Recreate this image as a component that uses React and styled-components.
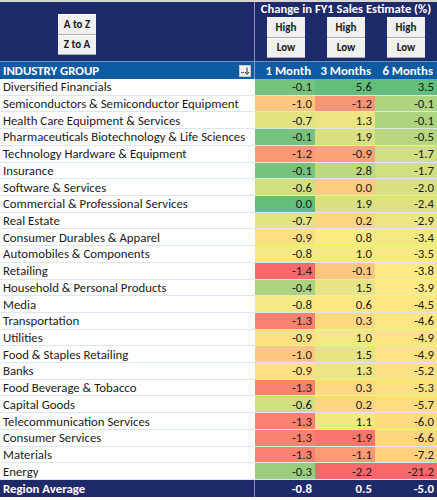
import styled, {createGlobalStyle} from 'styled-components';

const GlobalStyle = createGlobalStyle`
  body {
    margin: 0;
    background: #ffffff;
    font-family: Carlito, Lato, "Liberation Sans", sans-serif;
  }
`;

const rows = [
  ['Diversified Financials', -0.1, 5.6, 3.5],
  ['Semiconductors & Semiconductor Equipment', -1.0, -1.2, -0.1],
  ['Health Care Equipment & Services', -0.7, 1.3, -0.1],
  ['Pharmaceuticals Biotechnology & Life Sciences', -0.1, 1.9, -0.5],
  ['Technology Hardware & Equipment', -1.2, -0.9, -1.7],
  ['Insurance', -0.1, 2.8, -1.7],
  ['Software & Services', -0.6, 0.0, -2.0],
  ['Commercial & Professional Services', 0.0, 1.9, -2.4],
  ['Real Estate', -0.7, 0.2, -2.9],
  ['Consumer Durables & Apparel', -0.9, 0.8, -3.4],
  ['Automobiles & Components', -0.8, 1.0, -3.5],
  ['Retailing', -1.4, -0.1, -3.8],
  ['Household & Personal Products', -0.4, 1.5, -3.9],
  ['Media', -0.8, 0.6, -4.5],
  ['Transportation', -1.3, 0.3, -4.6],
  ['Utilities', -0.9, 1.0, -4.9],
  ['Food & Staples Retailing', -1.0, 1.5, -4.9],
  ['Banks', -0.9, 1.3, -5.2],
  ['Food Beverage & Tobacco', -1.3, 0.3, -5.3],
  ['Capital Goods', -0.6, 0.2, -5.7],
  ['Telecommunication Services', -1.3, 1.1, -6.0],
  ['Consumer Services', -1.3, -1.9, -6.6],
  ['Materials', -1.3, -1.1, -7.2],
  ['Energy', -0.3, -2.2, -21.2],
];

const average = [-0.8, 0.5, -5.0];
const periods = ['1 Month', '3 Months', '6 Months'];

const RED = [248, 105, 107];
const YELLOW = [255, 235, 132];
const GREEN = [99, 190, 123];

// excel style 3-colour scale: min / median / max per column
function columnScale(col) {
  const sorted = rows.map(r => r[col + 1]).sort((a, b) => a - b);
  const half = sorted.length / 2;
  const mid = (sorted[half - 1] + sorted[half]) / 2;
  return {min: sorted[0], mid, max: sorted[sorted.length - 1]};
}

const scales = [0, 1, 2].map(columnScale);

function mix(a, b, t) {
  return `rgb(${a.map((c, i) => Math.round(c + (b[i] - c) * t)).join(',')})`;
}

function heatColor(value, {min, mid, max}) {
  if (value <= mid) return mix(RED, YELLOW, (value - min) / (mid - min));
  return mix(YELLOW, GREEN, (value - mid) / (max - mid));
}

export default function App() {
  return (
    <>
      <GlobalStyle />
      <Sheet>
        <TopBand>
          <SortPanel>
            <ButtonStack>
              <SheetButton>A to Z</SheetButton>
              <SheetButton>Z to A</SheetButton>
            </ButtonStack>
          </SortPanel>
          <EstimatePanel>
            <Title>Change in FY1 Sales Estimate (%)</Title>
            <ButtonRow>
              {periods.map(p => (
                <ButtonStack key={p}>
                  <SheetButton>High</SheetButton>
                  <SheetButton>Low</SheetButton>
                </ButtonStack>
              ))}
            </ButtonRow>
          </EstimatePanel>
        </TopBand>

        <HeaderRow>
          <HeaderLabel>
            INDUSTRY GROUP
            <FilterButton>
              <svg width="10" height="10" viewBox="0 0 10 10">
                <path d="M1 6.5h3" stroke="#666" strokeWidth="1" />
                <path d="M7 1.5v6" stroke="#333" strokeWidth="1" />
                <path d="M5 6l2 2.5 2-2.5" fill="none" stroke="#333" strokeWidth="1" />
              </svg>
            </FilterButton>
          </HeaderLabel>
          {periods.map(p => (
            <HeaderCell key={p}>{p}</HeaderCell>
          ))}
        </HeaderRow>

        <Body>
          {rows.map(([name, ...values]) => (
            <DataRow key={name}>
              <NameCell>{name}</NameCell>
              {values.map((v, i) => (
                <ValueCell key={i} $bg={heatColor(v, scales[i])}>
                  {v.toFixed(1)}
                </ValueCell>
              ))}
            </DataRow>
          ))}
        </Body>

        <AverageRow>
          <AverageLabel>Region Average</AverageLabel>
          {average.map((v, i) => (
            <AverageValue key={i}>{v.toFixed(1)}</AverageValue>
          ))}
        </AverageRow>
      </Sheet>
    </>
  );
}

const Sheet = styled.div`
  width: 437px;
  border-top: 2px solid #d6d6d6;
`;

const TopBand = styled.div`
  display: grid;
  grid-template-columns: 255px 182px;
  height: 59px;
  background: #1f2a6b;
  border-bottom: 1px solid #6f93c4;
`;

const SortPanel = styled.div`
  padding: 12px 0 0 58px;
  border-right: 1px solid #8a93b8;
`;

const EstimatePanel = styled.div`
  display: flex;
  flex-direction: column;
  align-items: center;
`;

const Title = styled.div`
  color: #ffffff;
  font-weight: bold;
  font-size: 12.6px;
  line-height: 14px;
  white-space: nowrap;
`;

const ButtonRow = styled.div`
  display: grid;
  grid-template-columns: repeat(3, 60px);
  justify-items: center;
  padding-top: 1px;
`;

const ButtonStack = styled.div`
  display: flex;
  flex-direction: column;
  width: 38px;
`;

const SheetButton = styled.div`
  height: 20.5px;
  display: flex;
  align-items: center;
  justify-content: center;
  background: #f0f0f0;
  border-top: 1px solid #ffffff;
  border-bottom: 1px solid #a9a9a9;
  box-sizing: border-box;
  color: #1a1a1a;
  font-weight: bold;
  font-size: 11px;
`;

const grid = `
  display: grid;
  grid-template-columns: 255px 60px 60px 62px;
`;

const HeaderRow = styled.div`
  ${grid}
  height: 17px;
  background: #0c5ba3;
  color: #ffffff;
  font-weight: bold;
  font-size: 12.8px;
`;

const HeaderLabel = styled.div`
  display: flex;
  align-items: center;
  justify-content: space-between;
  padding: 0 3px 0 3px;
  border-right: 1px solid #7fa4cf;
`;

const FilterButton = styled.div`
  width: 12px;
  height: 12px;
  display: flex;
  align-items: center;
  justify-content: center;
  background: #f2f2f2;
  border: 1px solid #c8c8c8;
  box-sizing: border-box;
`;

const HeaderCell = styled.div`
  display: flex;
  align-items: center;
  justify-content: flex-end;
  padding-right: 4px;
`;

const Body = styled.div`
  display: grid;
  grid-template-rows: repeat(24, 1fr);
  height: 401px;
`;

const DataRow = styled.div`
  ${grid}
  min-height: 0;
  box-sizing: border-box;
  border-bottom: 1px solid #dce6f1;
  font-size: 12.8px;
  color: #1b1b1b;
`;

const NameCell = styled.div`
  display: flex;
  align-items: center;
  padding-left: 3px;
  white-space: nowrap;
  background: #ffffff;
`;

const ValueCell = styled.div`
  display: flex;
  align-items: center;
  justify-content: flex-end;
  padding-right: 3px;
  background: ${p => p.$bg};
`;

const AverageRow = styled.div`
  ${grid}
  height: 17px;
  background: #1f2a6b;
  color: #ffffff;
  font-weight: bold;
  font-size: 12.8px;
`;

const AverageLabel = styled.div`
  display: flex;
  align-items: center;
  padding-left: 3px;
  border-right: 1px solid #8a93b8;
`;

const AverageValue = styled.div`
  display: flex;
  align-items: center;
  justify-content: flex-end;
  padding-right: 3px;
`;
